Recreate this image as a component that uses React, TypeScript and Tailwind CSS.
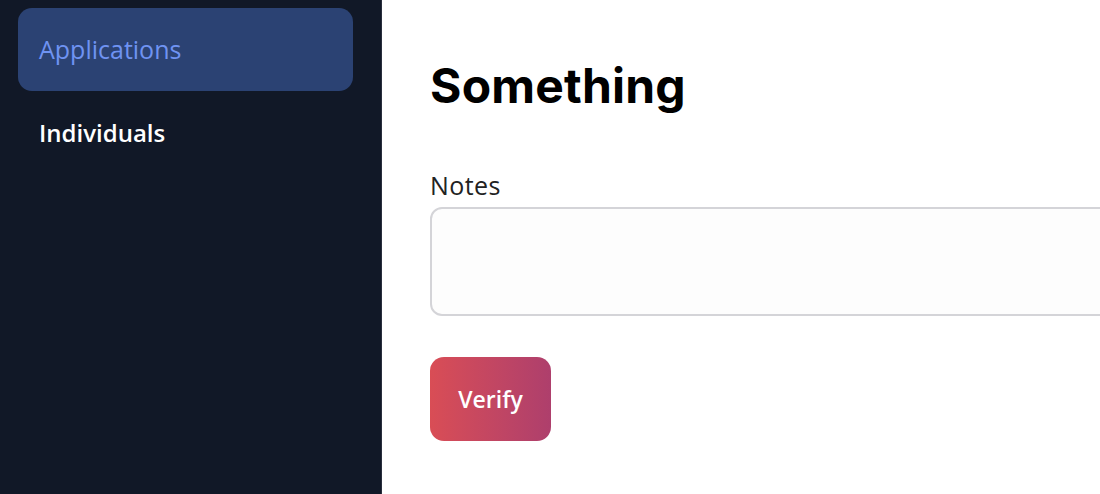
import React from "react";

const navItems = [
  { label: "Applications", active: true },
  { label: "Individuals", active: false },
];

const App = () => {
  return (
    <div className="flex h-[494px] w-[1100px] overflow-hidden bg-white font-['Open_Sans',sans-serif]">
      {/* sidebar */}
      <aside className="flex w-[382px] shrink-0 flex-col gap-[6px] border-r border-[#2a2f3d] bg-[#111827] pl-[18px] pr-[28px] pt-[8px]">
        {navItems.map((item) => (
          <div
            key={item.label}
            className={
              item.active
                ? "flex h-[83px] items-center rounded-[14px] bg-[#2b4273] px-[21px] text-[25px] text-[#6f93f2]"
                : "flex h-[72px] items-center px-[21px] text-[24px] font-semibold text-white"
            }
          >
            {item.label}
          </div>
        ))}
      </aside>

      {/* main */}
      <main className="flex flex-1 flex-col pl-[48px] pt-[55px]">
        <h1 className="font-['Inter',sans-serif] text-[48px] font-bold leading-[62px] tracking-[0.2px] text-black">
          Something
        </h1>
        <label className="mt-[51px] text-[25px] leading-[34px] tracking-[0.4px] text-[#222]">Notes</label>
        <textarea className="mt-[5px] h-[109px] w-[700px] resize-none rounded-[12px] border-2 border-[#d4d4d8] bg-[#fdfdfd]" />
        <button className="mt-[41px] flex h-[84px] w-[121px] items-center justify-center rounded-[14px] bg-gradient-to-r from-[#d94d55] to-[#ae3f6c] text-[23px] font-semibold text-white">
          Verify
        </button>
      </main>
    </div>
  );
};

export default App;
